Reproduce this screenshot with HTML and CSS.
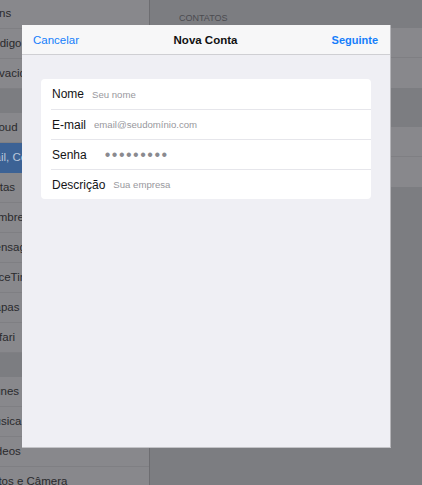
FILE: index.html
```html
<!DOCTYPE html>
<html lang="pt">
<head>
    <meta charset="UTF-8">
    <meta name="viewport" content="width=device-width, initial-scale=1.0">
    <title>Nova Conta</title>
    <link rel="stylesheet" href="styles.css">
</head>
<body>

<!-- Settings screen behind the sheet (dimmed) -->
<div class="settings">
    <div class="sidebar">
        <div class="group first">
            <div class="cell">Sons</div>
            <div class="cell">Código</div>
            <div class="cell">Privacidade</div>
        </div>
        <div class="group">
            <div class="cell">iCloud</div>
            <div class="cell selected">Mail, Contatos, Calendários</div>
            <div class="cell">Notas</div>
            <div class="cell">Lembretes</div>
            <div class="cell">Mensagens</div>
            <div class="cell">FaceTime</div>
            <div class="cell">Mapas</div>
            <div class="cell">Safari</div>
        </div>
        <div class="group">
            <div class="cell">iTunes e App Store</div>
            <div class="cell">Música</div>
            <div class="cell">Vídeos</div>
            <div class="cell">Fotos e Câmera</div>
        </div>
    </div>

    <div class="detail">
        <div class="section-title">CONTATOS</div>
        <div class="group">
            <div class="cell"></div>
            <div class="cell"></div>
        </div>
        <div class="group spaced">
            <div class="cell"></div>
            <div class="cell"></div>
        </div>
    </div>
</div>

<!-- New account sheet -->
<div class="sheet">
    <div class="navbar">
        <button class="nav-btn">Cancelar</button>
        <h1>Nova Conta</h1>
        <button class="nav-btn done">Seguinte</button>
    </div>

    <form class="form-card">
        <label class="field">
            <span>Nome</span>
            <input type="text" placeholder="Seu nome">
        </label>
        <label class="field">
            <span>E-mail</span>
            <input type="email" placeholder="email@seudomínio.com">
        </label>
        <label class="field">
            <span>Senha</span>
            <input type="password" class="password" value="123456789">
        </label>
        <label class="field">
            <span>Descrição</span>
            <input type="text" placeholder="Sua empresa">
        </label>
    </form>
</div>

</body>
</html>
```

FILE: styles.css
```css
body {
    margin: 0;
    padding: 0;
    width: 422px;
    height: 485px;
    overflow: hidden;
    font-family: "Liberation Sans", Arial, sans-serif;
    background-color: #7c7d81;
}

/* background settings (dimmed) */
.settings {
    display: flex;
    height: 485px;
}
.sidebar {
    width: 149px;
    border-right: 1px solid #6d6d71;
    overflow: hidden;
}
.detail {
    flex: 1;
}
.group {
    margin-top: 24px;
}
.group.first {
    margin-top: -1px;
}
.cell {
    box-sizing: border-box;
    height: 30px;
    line-height: 29px;
    background-color: #88888c;
    border-bottom: 1px solid #7f7f83;
    color: #2a2a2d;
    font-size: 11.5px;
    white-space: nowrap;
    text-indent: -15px;
}
.cell.selected {
    background-color: #3c6295;
    border-bottom-color: #3c6295;
    color: #b9c6d9;
}
.detail .group {
    margin-top: 0;
}
.detail .group.spaced {
    margin-top: 39px;
}
.detail .cell:last-child {
    border-bottom: none;
}
.section-title {
    height: 28px;
    box-sizing: border-box;
    padding: 13px 0 0 29px;
    font-size: 9px;
    line-height: 10px;
    color: #4b4b50;
}

/* sheet */
.sheet {
    position: absolute;
    top: 25px;
    left: 22px;
    width: 368px;
    height: 422px;
    background-color: #efeff4;
    border-right: 1px solid #b5b5b9;
    border-bottom: 1px solid #c3c3c7;
}
.navbar {
    display: grid;
    grid-template-columns: 1fr auto 1fr;
    align-items: center;
    height: 29px;
    padding: 0 12px 0 11px;
    background-color: #f7f7f8;
    border-bottom: 1px solid #cfcfd3;
}
.navbar h1 {
    margin: 0;
    font-size: 11.5px;
    font-weight: bold;
    color: #111;
}
.nav-btn {
    padding: 0;
    border: none;
    background: none;
    font-family: inherit;
    font-size: 11.5px;
    color: #157efb;
    text-align: left;
    cursor: pointer;
}
.nav-btn.done {
    font-size: 11px;
    font-weight: bold;
    text-align: right;
}

.form-card {
    margin: 24px 19px 0;
    background-color: #FFF;
    border-radius: 4px;
}
.field {
    display: flex;
    align-items: center;
    box-sizing: border-box;
    height: 30px;
    margin-left: 10px;
}
.field + .field {
    border-top: 1px solid #e6e6eb;
}
.field span {
    padding-left: 1px;
    margin-right: 8px;
    font-size: 12px;
    color: #141416;
}
.field input {
    flex: 1;
    min-width: 0;
    padding: 0;
    border: none;
    outline: none;
    background: none;
    font-family: "Liberation Sans", Arial, sans-serif;
    font-size: 9.6px;
    color: #8e8e93;
}
.field input::placeholder {
    color: #98989d;
}
.field input.password {
    margin-left: 10px;
    font-size: 16px;
    letter-spacing: 1.5px;
    color: #8a8a8f;
}
```
